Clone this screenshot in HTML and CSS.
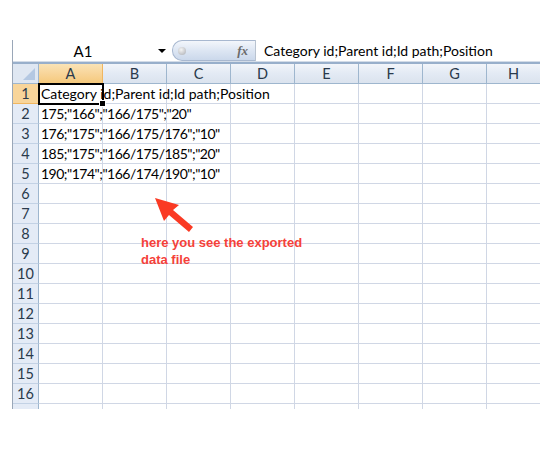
FILE: index.html
```html
<!DOCTYPE html>
<html>
<head>
<meta charset="utf-8">
<link rel="stylesheet" href="styles.css">
</head>
<body>
<div class="sheet">
  <div class="fbar">
    <div class="namebox">A1</div>
    <div class="dd"></div>
    <div class="pill"><span class="ball"></span><span class="fx">fx</span></div>
    <div class="ftext">Category id;Parent id;Id path;Position</div>
  </div>
  <div class="grid">
    <div class="corner"><span class="tri"></span></div>
    <div class="ch sel">A</div><div class="ch">B</div><div class="ch">C</div><div class="ch">D</div><div class="ch">E</div><div class="ch">F</div><div class="ch">G</div><div class="ch last">H</div>

    <div class="rh sel">1</div><div class="c active"><span class="txt">Category id;Parent id;Id path;Position</span><span class="handle"></span></div><div class="c"></div><div class="c"></div><div class="c"></div><div class="c"></div><div class="c"></div><div class="c"></div><div class="c last"></div>
    <div class="rh">2</div><div class="c"><span class="txt num">175;"166";"166/175";"20"</span></div><div class="c"></div><div class="c"></div><div class="c"></div><div class="c"></div><div class="c"></div><div class="c"></div><div class="c last"></div>
    <div class="rh">3</div><div class="c"><span class="txt num">176;"175";"166/175/176";"10"</span></div><div class="c"></div><div class="c"></div><div class="c"></div><div class="c"></div><div class="c"></div><div class="c"></div><div class="c last"></div>
    <div class="rh">4</div><div class="c"><span class="txt num">185;"175";"166/175/185";"20"</span></div><div class="c"></div><div class="c"></div><div class="c"></div><div class="c"></div><div class="c"></div><div class="c"></div><div class="c last"></div>
    <div class="rh">5</div><div class="c"><span class="txt num">190;"174";"166/174/190";"10"</span></div><div class="c"></div><div class="c"></div><div class="c"></div><div class="c"></div><div class="c"></div><div class="c"></div><div class="c last"></div>
    <div class="rh">6</div><div class="c"></div><div class="c"></div><div class="c"></div><div class="c"></div><div class="c"></div><div class="c"></div><div class="c"></div><div class="c last"></div>
    <div class="rh">7</div><div class="c"></div><div class="c"></div><div class="c"></div><div class="c"></div><div class="c"></div><div class="c"></div><div class="c"></div><div class="c last"></div>
    <div class="rh">8</div><div class="c"></div><div class="c"></div><div class="c"></div><div class="c"></div><div class="c"></div><div class="c"></div><div class="c"></div><div class="c last"></div>
    <div class="rh">9</div><div class="c"></div><div class="c"></div><div class="c"></div><div class="c"></div><div class="c"></div><div class="c"></div><div class="c"></div><div class="c last"></div>
    <div class="rh">10</div><div class="c"></div><div class="c"></div><div class="c"></div><div class="c"></div><div class="c"></div><div class="c"></div><div class="c"></div><div class="c last"></div>
    <div class="rh">11</div><div class="c"></div><div class="c"></div><div class="c"></div><div class="c"></div><div class="c"></div><div class="c"></div><div class="c"></div><div class="c last"></div>
    <div class="rh">12</div><div class="c"></div><div class="c"></div><div class="c"></div><div class="c"></div><div class="c"></div><div class="c"></div><div class="c"></div><div class="c last"></div>
    <div class="rh">13</div><div class="c"></div><div class="c"></div><div class="c"></div><div class="c"></div><div class="c"></div><div class="c"></div><div class="c"></div><div class="c last"></div>
    <div class="rh">14</div><div class="c"></div><div class="c"></div><div class="c"></div><div class="c"></div><div class="c"></div><div class="c"></div><div class="c"></div><div class="c last"></div>
    <div class="rh">15</div><div class="c"></div><div class="c"></div><div class="c"></div><div class="c"></div><div class="c"></div><div class="c"></div><div class="c"></div><div class="c last"></div>
    <div class="rh">16</div><div class="c"></div><div class="c"></div><div class="c"></div><div class="c"></div><div class="c"></div><div class="c"></div><div class="c"></div><div class="c last"></div>
    <div class="rh stub"></div><div class="c stub"></div><div class="c stub"></div><div class="c stub"></div><div class="c stub"></div><div class="c stub"></div><div class="c stub"></div><div class="c stub"></div><div class="c stub last"></div>
  </div>
</div>
<svg class="arrow" width="60" height="50" viewBox="0 0 60 50">
  <polygon points="3,3 27,10 21,15 41,32 37,37 17,20 12,26" fill="#fa3a24"/>
</svg>
<div class="note">here you see the exported<br>data file</div>
</body>
</html>
```

FILE: styles.css
```css
html, body {
  margin: 0;
  padding: 0;
  background: #fff;
}
body {
  position: relative;
  width: 550px;
  height: 450px;
  overflow: hidden;
  font-family: Lato, "Noto Sans", sans-serif;
}
.sheet {
  margin: 40px 0 0 12px;
  width: 527px;
  border-left: 1px solid #9aa7b8;
}
.fbar {
  display: flex;
  align-items: center;
  height: 21px;
  border-bottom: 1px solid #d3dce8;
}
.namebox {
  width: 140px;
  text-align: center;
  font-size: 15px;
  color: #000;
}
.dd {
  width: 0;
  height: 0;
  border-left: 4px solid transparent;
  border-right: 4px solid transparent;
  border-top: 4px solid #000;
  margin-left: 5px;
  margin-right: 6px;
}
.pill {
  width: 82px;
  height: 19px;
  border: 1px solid #a8b8d0;
  border-right: none;
  border-radius: 10px 0 0 10px;
  background: linear-gradient(#f3f6fb, #dde6f3 50%, #cbd8eb);
  display: flex;
  align-items: center;
}
.ball {
  width: 8px;
  height: 8px;
  border-radius: 50%;
  background: radial-gradient(circle at 40% 35%, #f4f4f4, #a9acb2);
  margin-left: 5px;
}
.fx {
  margin-left: auto;
  margin-right: 7px;
  font-family: "Liberation Serif", serif;
  font-style: italic;
  font-weight: bold;
  font-size: 13px;
  color: #6b6b6b;
}
.ftext {
  height: 21px;
  line-height: 21px;
  border-left: 1px solid #b9c3d0;
  padding-left: 8px;
  font-size: 14px;
  color: #000;
  flex: 1;
}
.grid {
  display: grid;
  grid-template-columns: 26px repeat(7, 64px) 53px;
  grid-template-rows: repeat(17, 20px) 5px;
  border-top: 2px solid #98afcb;
}
.corner {
  position: relative;
  box-sizing: border-box;
  background: #dfe7f2;
  border-right: 1px solid #9eb6ce;
  border-bottom: 1px solid #9eb6ce;
}
.tri {
  position: absolute;
  right: 3px;
  bottom: 3px;
  width: 0;
  height: 0;
  border-left: 12px solid transparent;
  border-bottom: 12px solid #b4c8e2;
}
.ch {
  box-sizing: border-box;
  background: linear-gradient(#f2f5fa, #e3eaf4 50%, #dbe3ee);
  border-right: 1px solid #9eb6ce;
  border-bottom: 1px solid #9eb6ce;
  text-align: center;
  line-height: 19px;
  font-size: 14.5px;
  color: #2a3a4c;
}
.ch.sel {
  background: linear-gradient(#fae3b6, #f8d59a 50%, #f5c97c);
  border-right-color: #f0b660;
  border-bottom-color: #f0b660;
}
.rh {
  box-sizing: border-box;
  background: #e4ebf6;
  border-right: 1px solid #9eb6ce;
  border-bottom: 1px solid #c3d2e5;
  text-align: center;
  line-height: 19px;
  font-size: 14.5px;
  color: #2a3a4c;
}
.rh.sel {
  background: #f8d59a;
  border-right-color: #f0b660;
  border-bottom-color: #f0b660;
}
.c {
  position: relative;
  box-sizing: border-box;
  border-right: 1px solid #d0d7e5;
  border-bottom: 1px solid #d0d7e5;
}
.c.last, .ch.last {
  border-right: none;
}
.stub {
  border-bottom: none;
}
.txt {
  position: absolute;
  left: 2px;
  top: 0;
  line-height: 20px;
  white-space: nowrap;
  font-size: 14px;
  color: #000;
  z-index: 2;
}
.txt.num {
  letter-spacing: -0.5px;
}
.active {
  outline: 2px solid #000;
  outline-offset: -1px;
  z-index: 1;
}
.handle {
  position: absolute;
  right: -4px;
  bottom: -4px;
  width: 5px;
  height: 5px;
  background: #000;
  border: 1px solid #fff;
  z-index: 3;
}
.arrow {
  position: absolute;
  left: 152px;
  top: 195px;
}
.note {
  position: absolute;
  left: 141px;
  top: 234px;
  font-family: "Liberation Sans", Arial, sans-serif;
  font-weight: bold;
  font-size: 13px;
  line-height: 17px;
  color: #f5413a;
}
```
